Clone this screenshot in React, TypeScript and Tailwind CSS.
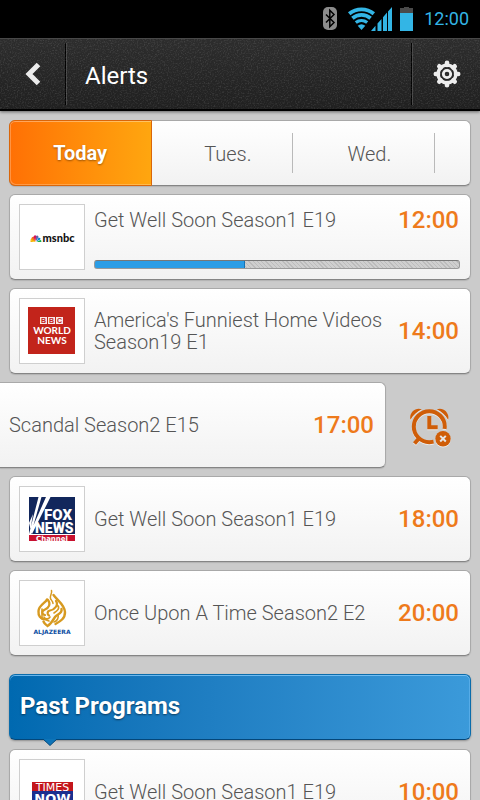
import { useState, type ReactNode } from "react";
import { clsx } from "clsx";

interface Program {
  id: number;
  title: string;
  time: string;
  logo?: ReactNode;
  progress?: number;
  swiped?: boolean;
}

const StatusIcons = () => (
  <svg width="92" height="26" viewBox="0 0 92 26" aria-hidden="true">
    <rect x="1" y="1" width="14" height="23" rx="5" fill="#8c8c8c" />
    <path d="M4 8.500l8 8-4.200 4.200V4.300L12 8.500l-8 8" fill="none" stroke="#000" strokeWidth="1.500" />
    <g fill="none" stroke="#33b5e5" strokeWidth="3.800">
      <path d="M27.200 7.800a19.200 19.200 0 0 1 24.600 0" />
      <path d="M30.400 12.300a14 14 0 0 1 18.200 0" />
      <path d="M33.800 16.600a9 9 0 0 1 11.400 0" strokeWidth="3.200" />
    </g>
    <path d="M39.500 24l-3.800-4.300a6 6 0 0 1 7.600 0z" fill="#33b5e5" />
    <path
      d="M49 25l4.500-5.200V25zM55.500 25v-7.500l4-4.500V25zM61 25V11.200l4-4.600V25zM66 25V5.500L70 1v24z"
      fill="#33b5e5"
    />
    <path d="M78 2h4V1h5v1h4v5H78z" fill="#4a4a4a" />
    <path d="M78 7h13v18H78z" fill="#33b5e5" />
  </svg>
);

const GearIcon = () => (
  <svg width="28" height="28" viewBox="-14 -14 28 28" fill="none" aria-hidden="true">
    <g stroke="#ededed" strokeWidth="4.600" strokeLinecap="round">
      <path d="M0-11.200V-9M0 9v2.200M-11.200 0H-9M9 0h2.200" />
      <path d="M-7.700-7.700l1.400 1.400M6.300 6.300l1.400 1.400M7.700-7.700L6.300-6.300M-6.300 6.300l-1.400 1.400" />
    </g>
    <circle r="8.900" stroke="#ededed" strokeWidth="3.400" />
    <circle r="3.700" stroke="#ededed" strokeWidth="2.800" />
  </svg>
);

const AlarmOffIcon = () => (
  <svg
    width="44"
    height="42"
    viewBox="0 0 44 42"
    fill="none"
    className="drop-shadow-[0_1px_0_rgba(255,255,255,0.6)]"
    aria-hidden="true"
  >
    <mask id="badge-gap">
      <path d="M0 0h44v42H0z" fill="#fff" />
      <circle cx="34" cy="31.700" r="10" fill="#000" />
    </mask>
    <g mask="url(#badge-gap)" stroke="#cf5d08" strokeWidth="4">
      <circle cx="20.300" cy="19.700" r="15.500" />
      <path d="M9.500 32l-4 4.500" />
      <path d="M20.300 9v11.300h8.400" />
    </g>
    <path d="M1.500 12.800C-.5 6 6.500-.5 12.800 2.300 8 4.600 4 8.200 1.500 12.800z" fill="#cf5d08" />
    <path d="M39.100 12.800c2-6.800-5-13.300-11.300-10.500 4.800 2.300 8.800 5.900 11.300 10.500z" fill="#cf5d08" />
    <circle cx="34" cy="31.700" r="7.700" fill="#cf5d08" />
    <path d="M31.200 28.900l5.600 5.600M36.800 28.900l-5.600 5.600" stroke="#e6e6e6" strokeWidth="2" />
  </svg>
);

const MsnbcLogo = () => (
  <svg viewBox="0 0 64 64" role="img" aria-label="msnbc">
    <path d="M15.500 37l-5-1.500c0-1.800 1.600-2.600 3-1.900z" fill="#f5b400" />
    <path d="M15.500 36.500l-4-2.700c-.2-1.800 1.500-2.600 2.700-1.700z" fill="#f37021" />
    <path d="M15.600 36l-2-3.600c-.2-2 2-2.800 2.600-1.400z" fill="#d4145a" />
    <path d="M16 36v-5c1.500-1.400 3 .1 2.300 1.800z" fill="#6460aa" />
    <path d="M16.300 36.500l2.200-3.700c1.500-.6 2.500.6 1.700 1.700z" fill="#0089d0" />
    <path d="M16.500 37l3.700-2c1.400.1 1.600 1.700.8 2z" fill="#0db14b" />
    <path d="M10.500 35.500L15 37h-4.500z" fill="#f5b400" />
    <text x="22.500" y="37" fontSize="11" fontWeight="900" fontFamily="Lato, sans-serif" fill="#111">
      msnbc
    </text>
  </svg>
);

const BbcLogo = () => (
  <svg viewBox="0 0 64 64" role="img" aria-label="BBC World News">
    <path d="M8 8h47v47H8z" fill="#c2241b" />
    <path d="M20 18h7v7h-7zM28 18h7v7h-7zM36 18h7v7h-7z" fill="#f9e9e7" />
    <g fontFamily="'Liberation Sans', sans-serif" fontSize="7" fontWeight="700" fill="#c2241b" textAnchor="middle">
      <text x="23.500" y="24">B</text>
      <text x="31.500" y="24">B</text>
      <text x="39.500" y="24">C</text>
    </g>
    <g fontFamily="Lato, sans-serif" fontSize="10" fontWeight="700" fill="#fff" textAnchor="middle">
      <text x="32" y="35">WORLD</text>
      <text x="32" y="45">NEWS</text>
    </g>
  </svg>
);

const FoxLogo = () => (
  <svg viewBox="0 0 64 64" role="img" aria-label="Fox News Channel">
    <path d="M9 10h46v37H9z" fill="#12275c" />
    <path d="M9 47L18.500 10h3L11 47zM10.500 45L26 10h4.500L12 47zM9 36l4-9-2.500 15z" fill="#fff" />
    <path d="M9 48h46v6H9z" fill="#c8102e" />
    <g fontFamily="Roboto, sans-serif" fontWeight="900" fill="#fff">
      <text x="24" y="33" fontSize="15">FOX</text>
      <text x="15" y="46" fontSize="14">NEWS</text>
    </g>
    <text x="32" y="53.500" fontSize="7" fontWeight="700" fontFamily="'DejaVu Sans', sans-serif" fill="#fff" textAnchor="middle">
      Channel
    </text>
  </svg>
);

const AlJazeeraLogo = () => (
  <svg viewBox="0 0 64 64" role="img" aria-label="Al Jazeera">
    <g fill="none" stroke="#d79a20" strokeLinecap="round">
      <path d="M31.500 9.500c1 3-2 5-1 8 .5 1.800 2.500 2.500 2.500 5" strokeWidth="1.500" />
      <path d="M33.500 14c4 5.500 11 9.500 11.500 17 .3 6.500-5 9.500-9.500 12" strokeWidth="2.400" />
      <path d="M27 18.500c-1 3-8 5.500-8.500 11.500-.4 4.500 2 8 6 8" strokeWidth="2.400" />
      <path d="M28 19c3 4 1 8-3 9.500s-3 5 0 5.500" strokeWidth="2.200" />
      <path d="M36 20c3 4-2 9-6 9.500-3 .5-3 4-1 5" strokeWidth="2.200" />
      <path d="M41.500 28c1 5-4.500 5-6.500 8s-4 7-7.500 9c-1.500-1.500-3-2-4-4.500" strokeWidth="2.400" />
      <path d="M37 24c4 3 0 6-3 8M22 28v9M30 36c-2 3-5 2-6 0M38 34c1 3-1 6-4 7M21 37l8 3" strokeWidth="1.600" />
    </g>
    <text x="32" y="53" fontSize="6" fontWeight="700" fontFamily="'DejaVu Sans', sans-serif" fill="#0b4ea2" textAnchor="middle">
      ALJAZEERA
    </text>
  </svg>
);

const TimesNowLogo = () => (
  <svg viewBox="0 0 64 64" role="img" aria-label="Times Now">
    <path d="M12 22h41v9H12z" fill="#c4161c" />
    <path d="M12 31h41v13H12z" fill="#1b2f8f" />
    <g fontFamily="'DejaVu Sans', sans-serif" fill="#fff" textAnchor="middle">
      <text x="32.500" y="30.500" fontSize="11">TIMES</text>
      <text x="32.500" y="42.500" fontSize="13" fontWeight="700">NOW</text>
    </g>
  </svg>
);

const ALERTS: Program[] = [
  { id: 1, title: "Get Well Soon Season1 E19", time: "12:00", logo: <MsnbcLogo />, progress: 41.5 },
  { id: 2, title: "America's Funniest Home Videos Season19 E1", time: "14:00", logo: <BbcLogo /> },
  { id: 3, title: "Scandal Season2 E15", time: "17:00", swiped: true },
  { id: 4, title: "Get Well Soon Season1 E19", time: "18:00", logo: <FoxLogo /> },
  { id: 5, title: "Once Upon A Time Season2 E2", time: "20:00", logo: <AlJazeeraLogo /> },
];

const PAST: Program[] = [
  { id: 6, title: "Get Well Soon Season1 E19", time: "10:00", logo: <TimesNowLogo /> },
];

const DAYS = ["Today", "Tues.", "Wed."];

function ProgramRow({ program }: { program: Program }) {
  const { title, time, logo, progress, swiped } = program;
  const hasProgress = progress !== undefined;

  return (
    <li className={clsx("flex", swiped && "-mx-[9px]")}>
      <article
        className={clsx(
          "flex min-h-[86px] flex-1 gap-[9px] border border-[#a9a9a9] border-b-[#858585] bg-linear-to-b from-white to-[#f2f2f2] py-[9px] pr-[11px] pl-[9px] shadow-[0_1px_1px_rgba(0,0,0,0.12)]",
          swiped ? "rounded-r-md border-l-0" : "rounded-md",
        )}
      >
        {logo ? <div className="size-[66px] shrink-0 border border-[#cfcfcf] bg-white">{logo}</div> : null}
        <div className={clsx("flex flex-1 flex-col", hasProgress ? "justify-between" : "justify-center")}>
          <div className="flex items-center justify-between gap-2">
            <h2 className="text-[20px] leading-[22px] font-light text-[#555]">{title}</h2>
            <time className="text-[24px] leading-8 font-medium text-[#ee7a1b]">{time}</time>
          </div>
          {hasProgress ? (
            <div
              role="progressbar"
              aria-label={title}
              aria-valuenow={progress}
              aria-valuemin={0}
              aria-valuemax={100}
              className="-mr-px mb-px h-[9px] overflow-hidden rounded-[3px] border border-[#999] border-t-[#777] bg-[repeating-linear-gradient(45deg,#cfcfcf_0_2px,#bcbcbc_2px_3px)]"
            >
              <div
                className="-my-px -ml-px h-[9px] rounded-l-[3px] border border-[#1673b5] bg-[#2b9de6]"
                style={{ width: `${progress}%` }}
              />
            </div>
          ) : null}
        </div>
      </article>
      {swiped ? (
        <button type="button" aria-label="Remove alert" className="flex w-[94px] items-center justify-center pt-1.5 pr-1">
          <AlarmOffIcon />
        </button>
      ) : null}
    </li>
  );
}

export default function App() {
  const [activeDay, setActiveDay] = useState("Today");

  return (
    <div className="flex h-screen flex-col overflow-hidden bg-[#cbcbcb] font-[Roboto,sans-serif]">
      <div className="flex h-[38px] shrink-0 items-center justify-end gap-[10px] bg-black pr-[11px] text-[#33b5e5]">
        <StatusIcons />
        <span className="text-[18px] leading-5">12:00</span>
      </div>

      <header className="relative flex h-[73px] shrink-0 items-stretch border-t border-b-2 border-t-[#484848] border-b-black bg-linear-to-b from-[#2d2d2d] to-[#202020] text-white shadow-[0_1px_3px_rgba(0,0,0,0.5)]">
        <svg className="pointer-events-none absolute inset-0 size-full opacity-10" aria-hidden="true">
          <filter id="grain">
            <feTurbulence type="fractalNoise" baseFrequency="0.7" numOctaves="2" />
            <feColorMatrix values="0 0 0 0 1  0 0 0 0 1  0 0 0 0 1  3 0 0 0 -1.4" />
          </filter>
          <rect width="100%" height="100%" filter="url(#grain)" />
        </svg>
        <button type="button" aria-label="Back" className="flex w-[65px] items-center justify-center">
          <svg width="16" height="24" viewBox="0 0 16 24" fill="none" aria-hidden="true">
            <path d="M13.500 2.500L4 12l9.500 9.500" stroke="#ebebeb" strokeWidth="5" />
          </svg>
        </button>
        <div className="my-1 w-[2px] border-l border-black bg-[#484848]" />
        <h1 className="flex flex-1 items-center pt-1 pl-[18px] text-[24px] leading-8">Alerts</h1>
        <div className="my-1 w-[2px] border-l border-black bg-[#484848]" />
        <button type="button" aria-label="Settings" className="flex w-[67px] items-center justify-center">
          <GearIcon />
        </button>
      </header>

      <main className="flex-1 overflow-y-auto px-[9px] pt-[9px] pb-2 [scrollbar-width:none]">
        <nav className="grid h-[66px] grid-cols-[4fr_4fr_4fr_1fr] rounded-md border border-[#a9a9a9] border-b-[#858585] bg-linear-to-b from-white to-[#f2f2f2] shadow-[0_1px_1px_rgba(0,0,0,0.12)]">
          {DAYS.map((day) =>
            day === activeDay ? (
              <button
                key={day}
                type="button"
                aria-pressed="true"
                className="-my-px -ml-px rounded-l-md border border-[#d9660a] bg-linear-to-r from-[#ff7005] to-[#ffa60f] text-[20px] leading-6 font-bold text-white shadow-[inset_0_1px_0_rgba(255,255,255,0.35),inset_1px_-1px_0_rgba(255,255,255,0.25)] text-shadow-[0_1px_2px_rgba(0,0,0,0.4)]"
              >
                {day}
              </button>
            ) : (
              <button
                key={day}
                type="button"
                aria-pressed="false"
                onClick={() => setActiveDay(day)}
                className="my-3 border-r border-[#b9b9b9] pt-0.5 pl-3 text-[20px] leading-6 font-light text-[#555]"
              >
                {day}
              </button>
            ),
          )}
        </nav>

        <ul className="mt-2 flex flex-col gap-2">
          {ALERTS.map((program) => (
            <ProgramRow key={program.id} program={program} />
          ))}
        </ul>

        <section className="mt-[18px]">
          <div className="relative flex h-[66px] items-center rounded-md border border-[#0b6cab] border-b-[#04477a] bg-linear-to-r from-[#0069b0] to-[#3b9ada] pl-[10px] shadow-[inset_0_1px_0_rgba(130,200,250,0.8),inset_-1px_0_0_rgba(130,200,250,0.4),0_1px_2px_rgba(0,0,0,0.3)]">
            <h2 className="pb-0.5 text-[24px] leading-8 font-bold text-white text-shadow-[0_1px_2px_rgba(0,0,0,0.5)]">
              Past Programs
            </h2>
            <svg className="absolute top-full left-[33px]" width="14" height="7" viewBox="0 0 14 7" aria-hidden="true">
              <path d="M0 0L7 6.500 14 0V-1H0z" fill="#0d74b8" />
              <path d="M0 0l7 6.500L14 0" fill="none" stroke="#04477a" />
            </svg>
          </div>
          <ul className="mt-[9px] flex flex-col gap-2">
            {PAST.map((program) => (
              <ProgramRow key={program.id} program={program} />
            ))}
          </ul>
        </section>
      </main>
    </div>
  );
}
